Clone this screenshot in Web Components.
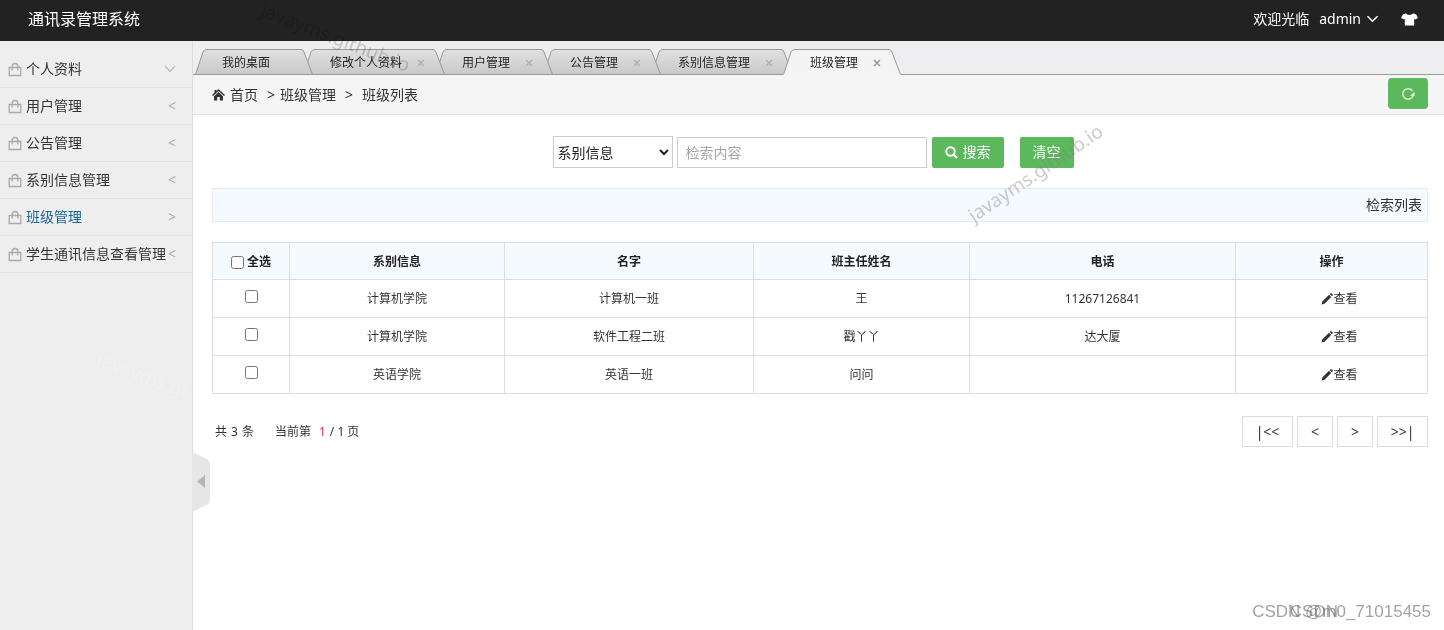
<!DOCTYPE html>
<html lang="zh-CN">
<head>
<meta charset="utf-8">
<title>通讯录管理系统</title>
<style>
html,body{margin:0;min-height:100%}
body{font-family:"Noto Sans","Noto Sans CJK SC",sans-serif;font-size:14px;line-height:20px;color:#333;background:#fff}
</style>
</head>
<body>
<contacts-app></contacts-app>
<script>
const define = (name, html, init) => customElements.define(name, class extends HTMLElement {
  connectedCallback() {
    if (this.shadowRoot) return;
    const root = this.attachShadow({mode: 'open'});
    const t = document.createElement('template');
    t.innerHTML = typeof html === 'function' ? html(this) : html;
    root.append(t.content.cloneNode(true));
    if (init) init(this, root);
  }
});

define('app-header', `
<style>
:host{display:flex;align-items:center;justify-content:space-between;height:41px;padding:0 26px 3px 28px;box-sizing:border-box;background:#222;color:#fff}
h1{margin:0;font-size:16px;font-weight:400}
nav{display:flex;align-items:center;gap:10px}
a{color:inherit;text-decoration:none;display:flex;align-items:center;gap:5px}
.skin{margin-left:12px}
</style>
<h1>通讯录管理系统</h1>
<nav><span>欢迎光临</span><a href="#admin">admin
<svg width="13" height="8" viewBox="0 0 13 8"><path d="M1.5 1.2 6.5 6.2 11.5 1.2" fill="none" stroke="#fff" stroke-width="1.6"/></svg></a>
<a class="skin" href="#skin" aria-label="换肤"><svg width="17" height="13" viewBox="0 0 17 13"><path d="M5 .3C6.200 2.500 10.800 2.500 12 .3L15.200 1.500 17 5 14 6.400 13.200 5.500V12.600H3.800V5.500L3 6.400 0 5 1.800 1.500Z" fill="#fff"/></svg></a></nav>`);

define('menu-item', el => {
  const s = el.getAttribute('state');
  const mark = s === 'down'
    ? '<svg width="12" height="8" viewBox="0 0 12 8"><path d="M1 1 6 6.500 11 1" fill="none" stroke="#bbb" stroke-width="1.300"/></svg>'
    : `<span class="mark">${s === 'open' ? '&gt;' : '&lt;'}</span>`;
  return `<style>
:host{display:block;border-bottom:1px solid #e3e3e3}
a{display:flex;align-items:center;height:36px;padding:0 16px 0 8px;color:#333;text-decoration:none;white-space:nowrap}
:host([current]) a{color:#1a6496}
.bag{margin-right:4px;flex:none}
.label{flex:1;min-width:0}
.mark{color:#aaa}
</style><a href="#menu"><svg class="bag" width="14" height="15" viewBox="0 0 14 15"><path d="M1.200 5.500H12.800V13.500H1.200ZM4.200 8.500V4Q4.200 1.500 7 1.500T9.800 4V8.500" fill="none" stroke="#aaa" stroke-width="1.300"/></svg><span class="label"><slot></slot></span>${mark}</a>`;
});

define('side-menu', `
<style>
:host{display:block;position:relative;width:192px;flex:none;background:#eee;border-right:1px solid #ddd;padding-top:10px;box-sizing:content-box}
button{position:absolute;left:192px;top:411px;width:18px;height:60px;padding:0;border:0;background:none;z-index:3}
svg{display:block}
</style>
<nav>
<menu-item state="down">个人资料</menu-item>
<menu-item>用户管理</menu-item>
<menu-item>公告管理</menu-item>
<menu-item>系别信息管理</menu-item>
<menu-item state="open" current>班级管理</menu-item>
<menu-item>学生通讯信息查看管理</menu-item>
</nav>
<button type="button" aria-label="收起菜单"><svg width="18" height="60" viewBox="0 0 18 60"><path d="M0 0 15 7Q18 9 18 12V48Q18 51 15 53L0 60Z" fill="#e6e6e6"/><path d="M13 23V36L5 29.500Z" fill="#b5b5b5"/></svg></button>`);

define('page-tab', el => {
  const on = el.hasAttribute('active');
  const grad = on ? ['#f2f2f2', '#f5f5f5'] : ['#e0e0e0', '#c9c9c9'];
  const defs = `<defs><linearGradient id="g" x1="0" y1="0" x2="0" y2="26" gradientUnits="userSpaceOnUse"><stop stop-color="${grad[0]}"/><stop offset="1" stop-color="${grad[1]}"/></linearGradient></defs>`;
  return `<style>
:host{display:flex;position:relative;height:26px;margin-right:-10px;font-size:12px;color:#222}
svg{display:block;flex:none}
.mid{display:flex;align-items:center;box-sizing:border-box;border-top:1px solid #999;border-bottom:1px solid ${on ? '#f5f5f5' : '#999'};background:linear-gradient(${grad[0]},${grad[1]});padding:2px 0 0 15px}
a{color:inherit;text-decoration:none}
button{border:0;background:none;padding:0;margin:0 4px 0 11px;width:16px;height:16px}
button svg{margin:auto}
.none{display:inline-block;width:31px}
</style>
<svg width="12" height="26" viewBox="0 0 12 26">${defs}<path d="M0 26 8 3Q9 .5 12 .5V26Z" fill="url(#g)"/><path d="M.5 25.500 8 3Q9 .5 12 .5${on ? '' : 'M0 25.500H12'}" fill="none" stroke="#999"/></svg>
<div class="mid"><a href="#tab"><slot></slot></a>${el.hasAttribute('fixed') ? '<span class="none"></span>' : `<button type="button" aria-label="关闭"><svg width="8" height="8" viewBox="0 0 8 8"><path d="M1 1 7 7M7 1 1 7" stroke="${on ? '#999' : '#b0b0b0'}" stroke-width="1.500"/></svg></button>`}</div>
<svg width="12" height="26" viewBox="0 0 12 26">${defs}<path d="M0 .5Q2 .5 3 3L12 26H0Z" fill="url(#g)"/><path d="M0 .5Q2 .5 3 3L11.500 25.500${on ? '' : 'M0 25.500H12'}" fill="none" stroke="#999"/></svg>`;
});

define('tab-bar', `
<style>
:host{display:flex;align-items:flex-end;height:34px;background:linear-gradient(#999,#999) bottom/100% 1px no-repeat #eeeef0;padding-left:2px;isolation:isolate}
</style>
<slot></slot>`, (el) => {
  // Earlier tabs overlap later ones; the active tab is in front of all.
  const tabs = [...el.querySelectorAll('page-tab')];
  tabs.forEach((t, i) => { t.style.zIndex = t.hasAttribute('active') ? tabs.length + 1 : tabs.length - i; });
});

define('bread-crumb', `
<style>
:host{display:flex;align-items:center;justify-content:space-between;height:40px;box-sizing:border-box;padding:0 16px 0 19px;background:#f5f5f5;border-bottom:1px solid #e5e5e5}
nav{display:flex;align-items:center}
a{color:inherit;text-decoration:none;display:flex;align-items:center;gap:5px}
.a{margin:0 5px 0 9px}.b{margin:0 9px}
button{width:40px;height:31px;border:0;border-radius:4px;background:#5cb85c;padding:0;display:grid;place-items:center;margin-bottom:2px}
</style>
<nav><a href="#home"><svg width="13" height="12" viewBox="0 0 13 12"><path d="M6.500 0 13 6 12 7 6.500 2 1 7 0 6 2.500 3.600V1H4.300V2ZM6.500 3 11 7.200V11.500H7.800V8H5.200V11.500H2V7.200Z" fill="#333"/></svg>首页</a><span class="a">&gt;</span><span>班级管理</span><span class="b">&gt;</span><span>班级列表</span></nav>
<button type="button" aria-label="刷新"><svg width="14" height="14" viewBox="0 0 14 14"><path d="M12 9A5.300 5.300 0 1 1 11.500 4" fill="none" stroke="#d8f5d8" stroke-width="1.500"/><path d="M13.500 4.500V9H9Z" fill="#d8f5d8"/></svg></button>`);

define('search-form', `
<style>
form{display:flex;justify-content:center;align-items:center;padding:21px 14px 20px 0;margin:0}
select,input,button{font:inherit;box-sizing:border-box}
select{width:120px;height:32px;border:1px solid #ccc;border-radius:0;background:#fff;color:#222;padding:0;margin-right:4px}
input{width:250px;height:31px;border:1px solid #ccc;padding:0 8px;margin-right:5px}
input::placeholder{color:#a5a5a5}
button{height:31px;border:0;border-radius:2px;background:#5cb85c;color:#fff;padding:0 13px;display:flex;align-items:center;gap:5px}
.clear{margin-left:16px}
</style>
<form onsubmit="return false">
<select aria-label="检索字段"><option>系别信息</option></select>
<input type="text" placeholder="检索内容" aria-label="检索内容">
<button type="submit"><svg width="13" height="13" viewBox="0 0 13 13"><circle cx="5.500" cy="5.500" r="4.200" fill="none" stroke="#fff" stroke-width="2"/><path d="M8.500 8.500 12 12" stroke="#fff" stroke-width="2.400"/></svg>搜索</button>
<button class="clear" type="reset">清空</button>
</form>`);

define('class-table', el => {
  const rows = [['计算机学院','计算机一班','王','11267126841'],['计算机学院','软件工程二班','戳丫丫','达大厦'],['英语学院','英语一班','问问','']];
  const pencil = '<svg width="12" height="12" viewBox="0 0 12 12"><path d="M8 1.800 10.200 4 3.500 10.700.5 11.500 1.300 8.500ZM8.700 1.100 9.500.3Q10 0 10.500.3L11.700 1.500Q12 2 11.700 2.500L10.900 3.300Z" fill="#333"/></svg>';
  return `<style>
:host{display:block}
table{width:100%;table-layout:fixed;border-collapse:collapse;font-size:12px;text-align:center;color:#333}
th,td{border:1px solid #ddd;padding:0;height:38px;box-sizing:border-box}
th{height:37px;padding-top:2px;background:#f5fafe;font-weight:700;color:#222}
input{margin:0 3px 0 0;width:13px;height:13px}
td input{margin:0 0 5px;vertical-align:middle}
label{display:inline-flex;align-items:center;vertical-align:middle}
a{display:inline-flex;align-items:center;vertical-align:middle;color:inherit;text-decoration:none}
td:last-child{padding-left:16px}
</style>
<table><colgroup><col style="width:77px"><col style="width:215px"><col style="width:249px"><col style="width:216px"><col style="width:266px"><col style="width:192px"></colgroup>
<thead><tr><th><label><input type="checkbox">全选</label></th><th>系别信息</th><th>名字</th><th>班主任姓名</th><th>电话</th><th>操作</th></tr></thead>
<tbody>${rows.map(r => `<tr><td><input type="checkbox" aria-label="选择${r[1]}"></td>${r.map(c => `<td>${c}</td>`).join('')}<td><a href="#view">${pencil}查看</a></td></tr>`).join('')}</tbody></table>`;
});

define('page-nav', `
<style>
:host{display:flex;justify-content:space-between;align-items:center;margin-top:22px}
.info{display:flex;gap:21px;font-size:12px;padding-left:3px}
.info span{display:flex;gap:4px}
b{font-weight:400;color:#d33;margin-left:4px}
.btns{display:flex;gap:4px}
button{font:inherit;color:#333;height:31px;min-width:36px;padding:0 12px;border:1px solid #ddd;background:#fff}
.end{min-width:51px}
</style>
<div class="info"><span><i style="font-style:normal">共</i> 3 <i style="font-style:normal">条</i></span><span>当前第 <b>1</b> / 1 页</span></div>
<div class="btns"><button type="button" class="end">|&lt;&lt;</button><button type="button">&lt;</button><button type="button">&gt;</button><button type="button" class="end">&gt;&gt;|</button></div>`);

define('water-mark', `
<style>:host{display:block;position:absolute;white-space:nowrap;pointer-events:none;z-index:9;transform-origin:0 50%;font-size:19px;line-height:20px}</style><slot></slot>`);

define('contacts-app', `
<style>
:host{display:flex;flex-direction:column;position:relative;min-height:100vh;overflow:hidden}
.body{display:flex;flex:1}
main{flex:1;min-width:0}
.content{padding:0 16px 20px 19px}
.bar{display:flex;align-items:center;justify-content:flex-end;height:34px;box-sizing:border-box;border:1px solid #e4ebf2;background:#f5fafe;padding-right:5px;margin-bottom:20px}
.w1{left:970px;top:207px;rotate:-34deg;color:rgba(130,130,130,.42)}
.w2{left:262px;top:-1px;rotate:21deg;color:rgba(130,130,130,.35);mix-blend-mode:multiply}
.w3{left:98px;top:348px;rotate:21deg;color:rgba(255,255,255,.22)}
.w4,.w5{bottom:8px;font-family:"Liberation Sans",Arial,sans-serif;font-size:17px;color:rgba(100,100,100,.6)}
.w4{right:13px}
.w5{right:106px}
</style>
<app-header></app-header>
<div class="body">
<side-menu></side-menu>
<main>
<tab-bar><page-tab fixed>我的桌面</page-tab><page-tab>修改个人资料</page-tab><page-tab>用户管理</page-tab><page-tab>公告管理</page-tab><page-tab>系别信息管理</page-tab><page-tab active>班级管理</page-tab></tab-bar>
<bread-crumb></bread-crumb>
<div class="content">
<search-form></search-form>
<div class="bar">检索列表</div>
<class-table></class-table>
<page-nav></page-nav>
</div>
</main>
</div>
<water-mark class="w1">javayms.github.io</water-mark>
<water-mark class="w2">javayms.github.io</water-mark>
<water-mark class="w3">javayms.gi</water-mark>
<water-mark class="w4">CSDN @m0_71015455</water-mark>
<water-mark class="w5">CSDN</water-mark>`);
</script>
</body>
</html>
